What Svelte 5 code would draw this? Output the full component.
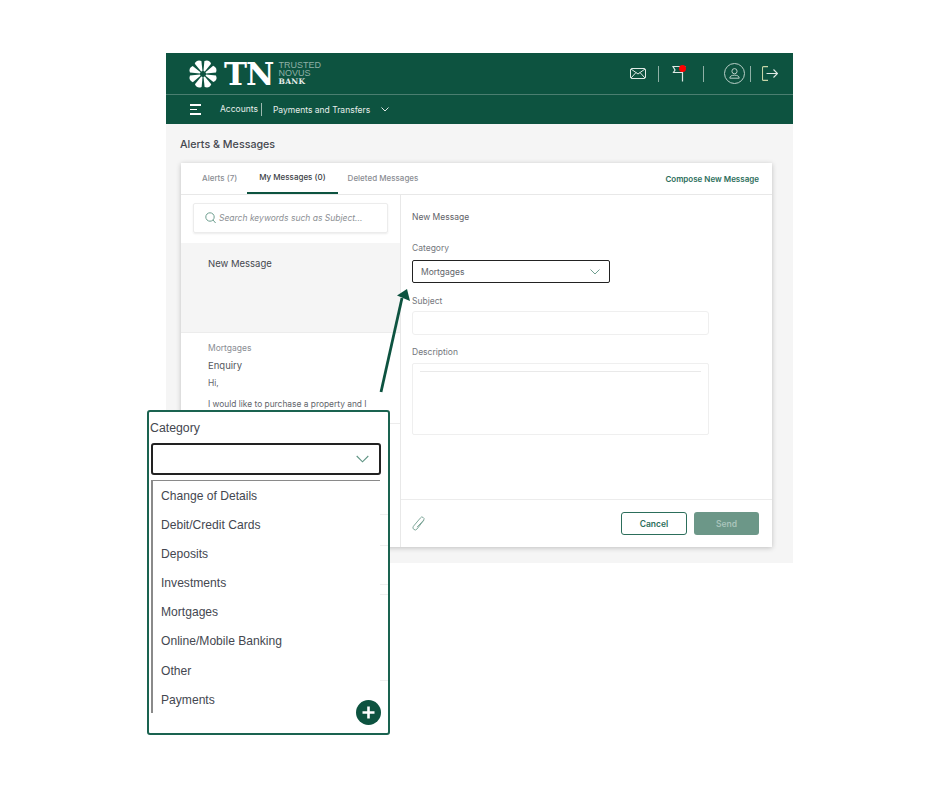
<script>
	const petals = [0, 45, 90, 135, 180, 225, 270, 315];
	const categories = [
		'Change of Details',
		'Debit/Credit Cards',
		'Deposits',
		'Investments',
		'Mortgages',
		'Online/Mobile Banking',
		'Other',
		'Payments'
	];
	// list rows of the page behind that peek out beside the dropdown panel
	const peeks = [102, 133, 172, 182, 268];
</script>

<div class="page">
	<div class="frame">
		<header class="top">
			<div class="logo">
				<svg class="flower" width="32" height="32" viewBox="-16 -16 32 32">
					{#each petals as a}
						<path d="M-0.7 -3L-3.6 -12.6Q0 -16 3.6 -12.6L0.7 -3Z" fill="#fff" transform="rotate({a + 22})" />
					{/each}
				</svg>
				<span class="tn">TN</span>
				<div class="bankname">
					<span>TRUSTED</span>
					<span>NOVUS</span>
					<b>BANK</b>
				</div>
			</div>
			<div class="tools">
				<svg class="mail" width="16" height="11" viewBox="0 0 16 11" fill="none" stroke="#dfe9e5" stroke-width="1">
					<rect x="0.5" y="0.5" width="15" height="10" rx="1.5" />
					<path d="M1 1l7 5 7-5M1 10l5-5.5M15 10l-5-5.5" />
				</svg>
				<i class="sep first"></i>
				<div class="flag">
					<svg width="14" height="17" viewBox="0 0 14 17" fill="none" stroke="#dfe9e5" stroke-width="1.2">
						<path d="M1 1.5h11l-1.5 1v5H1.5l1.5-2.5z M10.5 7.5V16.5" />
					</svg>
					<span class="dot"></span>
				</div>
				<i class="sep second"></i>
				<svg class="user" width="21" height="21" viewBox="0 0 21 21" fill="none" stroke="#b9cfc7" stroke-width="1">
					<circle cx="10.5" cy="10.5" r="10" />
					<circle cx="10.5" cy="8.2" r="2.6" />
					<path d="M5.8 15.2c0-2.2 2-3 4.7-3s4.7.8 4.7 3z" />
				</svg>
				<i class="sep third"></i>
				<svg class="logout" width="16" height="15" viewBox="0 0 16 15" fill="none" stroke="#dfe9e5" stroke-width="1.1">
					<path d="M6 .6H1.5a1 1 0 0 0-1 1v11.8a1 1 0 0 0 1 1H6" stroke="#c8d6a8" />
					<path d="M4.5 7.5h11M11.5 3.5l4 4-4 4" />
				</svg>
			</div>
		</header>
		<nav class="nav">
			<span class="burger"><i></i><i class="short"></i><i></i></span>
			<span class="navlink bar">Accounts</span>
			<span class="navlink">Payments and Transfers</span>
			<svg class="navchev" width="8" height="5" viewBox="0 0 8 5" fill="none" stroke="#dfe9e5" stroke-width="1">
				<path d="M.5 .5L4 4 7.5 .5" />
			</svg>
		</nav>

		<main class="main">
			<h1>Alerts &amp; Messages</h1>
			<section class="card">
				<div class="tabs">
					<span class="tab alerts">Alerts (7)</span>
					<span class="tab active">My Messages (0)</span>
					<span class="tab">Deleted Messages</span>
					<span class="compose">Compose New Message</span>
				</div>
				<div class="body">
					<aside class="left">
						<div class="searchwrap">
							<div class="search">
								<svg width="11" height="12" viewBox="0 0 11 12" fill="none" stroke="#6f9f90" stroke-width="1">
									<circle cx="5" cy="5" r="4.2" />
									<path d="M8 8l2.6 3" />
								</svg>
								<span>Search keywords such as Subject...</span>
							</div>
						</div>
						<div class="newmsg">New Message</div>
						<div class="msg">
							<div class="msgcat">Mortgages</div>
							<div class="msgsub">Enquiry</div>
							<div class="msgtext">Hi,</div>
							<div class="msgtext gap">I would like to purchase a property and I</div>
						</div>
					</aside>
					<div class="right">
						<div class="form">
							<div class="formtitle">New Message</div>
							<label class="lbl catlbl" for="cat">Category</label>
							<div class="select" id="cat">
								<span>Mortgages</span>
								<svg width="10" height="6" viewBox="0 0 10 6" fill="none" stroke="#6f9f90" stroke-width="1">
									<path d="M.5 .5L5 5 9.5 .5" />
								</svg>
							</div>
							<label class="lbl" for="subj">Subject</label>
							<div class="input" id="subj"></div>
							<label class="lbl desclbl" for="desc">Description</label>
							<div class="textarea" id="desc"><i></i></div>
						</div>
						<div class="foot">
							<svg width="14" height="15" viewBox="0 0 14 15" fill="none" stroke="#7fa79a" stroke-width="1">
								<path d="M12.5 3.5L5.5 12.5a2.2 2.2 0 0 1-3.6-2.7L8.8 1.6a1.5 1.5 0 0 1 3.5 1.9L5.6 10.6" transform="translate(-0.5 0.5)" />
							</svg>
							<div class="btns">
								<span class="btn cancel">Cancel</span>
								<span class="btn send">Send</span>
							</div>
						</div>
					</div>
				</div>
			</section>
		</main>
	</div>

	<svg class="arrow" width="40" height="110" viewBox="0 0 40 110">
		<path d="M3 104L24 10" stroke="#0d5340" stroke-width="2.8" fill="none" />
		<path d="M29 1L32 13L19 7.5Z" fill="#0d5340" />
	</svg>

	<div class="callout">
		<div class="cattitle">Category</div>
		<div class="bigselect">
			<svg width="13" height="8" viewBox="0 0 13 8" fill="none" stroke="#5f9484" stroke-width="1.1">
				<path d="M.7 1l5.8 5.8L12.3 1" />
			</svg>
		</div>
		<ul class="options">
			{#each categories as c}
				<li>{c}</li>
			{/each}
		</ul>
		{#each peeks as y}
			<i class="peek" style="top: {y}px"></i>
		{/each}
		<span class="plus">
			<svg width="25" height="25" viewBox="0 0 25 25">
				<circle cx="12.5" cy="12.5" r="12.5" fill="#0d5340" />
				<path d="M12.5 6.5v12M6.5 12.5h12" stroke="#fff" stroke-width="2.6" />
			</svg>
		</span>
	</div>
</div>

<style>
	:global(body) {
		background: #fff;
	}
	.page {
		position: relative;
		width: 940px;
		height: 788px;
		padding: 53px 0 0 166px;
		box-sizing: border-box;
		font-family: Inter, 'Liberation Sans', sans-serif;
		overflow: hidden;
	}
	.frame {
		width: 627px;
		height: 510px;
		background: #f5f5f5;
		display: flex;
		flex-direction: column;
	}
	.top {
		height: 41px;
		background: #0d5340;
		border-bottom: 1px solid #4b7e70;
		display: flex;
		align-items: center;
		justify-content: space-between;
		padding: 0 15px 0 21px;
		flex: none;
	}
	.logo {
		display: flex;
		align-items: center;
	}
	.flower {
		margin-right: 5px;
	}
	.tn {
		font-family: 'DejaVu Serif', 'Liberation Serif', serif;
		font-weight: 700;
		font-size: 31px;
		line-height: 32px;
		letter-spacing: -1px;
		color: #fff;
		margin-right: 5px;
	}
	.bankname {
		display: flex;
		flex-direction: column;
		font-size: 9px;
		line-height: 8.5px;
		color: #8fb0a6;
		font-family: 'Liberation Sans', sans-serif;
	}
	.bankname b {
		font-family: 'DejaVu Serif', serif;
		font-size: 7.5px;
		letter-spacing: 0.4px;
		color: #e8efec;
	}
	.tools {
		display: flex;
		align-items: center;
	}
	.sep {
		display: block;
		width: 1px;
		height: 16px;
		background: #8fb0a6;
	}
	.sep.first {
		margin: 0 13px 0 12px;
	}
	.sep.second {
		margin: 0 20px 0 17px;
	}
	.sep.third {
		margin: 0 11px 0 5px;
	}
	.flag {
		position: relative;
		display: flex;
	}
	.dot {
		position: absolute;
		top: 0;
		left: 7px;
		width: 7px;
		height: 7px;
		border-radius: 50%;
		background: #f00;
	}
	.nav {
		height: 29px;
		background: #0d5340;
		display: flex;
		align-items: center;
		padding-left: 24px;
		flex: none;
		color: #e6eeeb;
		font-size: 8.5px;
	}
	.burger {
		display: flex;
		flex-direction: column;
		gap: 3px;
		width: 11px;
		margin-right: 19px;
	}
	.burger i {
		display: block;
		height: 1.5px;
		background: #fff;
	}
	.burger i.short {
		width: 7px;
	}
	.navlink.bar {
		border-right: 1px solid #9db9b0;
		padding-right: 3px;
		margin-right: 11px;
		line-height: 13px;
	}
	.navchev {
		margin-left: 11px;
	}
	.main {
		padding: 0 21px 16px 15px;
		flex: 1;
		display: flex;
		flex-direction: column;
	}
	h1 {
		margin: 14px 0 11px -1px;
		font-size: 10.7px;
		line-height: 14px;
		font-weight: 500;
		color: #45484f;
	}
	.card {
		flex: 1;
		background: #fff;
		box-shadow: 0 1px 5px rgba(0, 0, 0, 0.22);
		display: flex;
		flex-direction: column;
		min-height: 0;
	}
	.tabs {
		height: 31px;
		flex: none;
		border-bottom: 1px solid #e8e8e8;
		display: flex;
		align-items: stretch;
		font-size: 8px;
		color: #8a8d93;
		font-weight: 500;
		padding-left: 21px;
		padding-right: 13px;
	}
	.tab {
		display: flex;
		align-items: center;
		padding-bottom: 2px;
	}
	.tab.alerts {
		margin-right: 10px;
	}
	.tab.active {
		color: #3c3f46;
		padding: 0 12px 2px;
		border-bottom: 2px solid #0d5340;
		margin-right: 10px;
		height: 31px;
		box-sizing: border-box;
	}
	.compose {
		margin-left: auto;
		align-self: center;
		color: #2c6e5b;
		font-weight: 600;
	}
	.body {
		flex: 1;
		display: flex;
		min-height: 0;
	}
	.left {
		width: 220px;
		flex: none;
		border-right: 1px solid #e8e8e8;
		box-sizing: border-box;
	}
	.searchwrap {
		padding: 8px 12px 10px;
	}
	.search {
		height: 30px;
		box-sizing: border-box;
		border: 1px solid #ececec;
		box-shadow: 0 1px 2px rgba(0, 0, 0, 0.08);
		border-radius: 2px;
		display: flex;
		align-items: center;
		gap: 3px;
		padding-left: 11px;
		font-size: 8.5px;
		font-style: italic;
		color: #8c8f94;
	}
	.newmsg {
		height: 90px;
		box-sizing: border-box;
		background: #f5f5f5;
		padding: 14px 0 0 27px;
		font-size: 9.5px;
		line-height: 14px;
		color: #45484f;
		border-bottom: 1px solid #ececec;
	}
	.msg {
		padding: 9px 0 0 27px;
		height: 91px;
		box-sizing: border-box;
		border-bottom: 1px solid #ececec;
	}
	.msgcat {
		font-size: 8.5px;
		line-height: 12px;
		color: #8a8d93;
	}
	.msgsub {
		font-size: 9.5px;
		line-height: 14px;
		margin-top: 5px;
		color: #55585e;
	}
	.msgtext {
		font-size: 8.4px;
		line-height: 12px;
		margin-top: 4px;
		color: #62656b;
	}
	.msgtext.gap {
		margin-top: 9px;
	}
	.right {
		flex: 1;
		display: flex;
		flex-direction: column;
	}
	.form {
		flex: 1;
		padding: 16px 0 0 11px;
		display: flex;
		flex-direction: column;
		align-items: flex-start;
	}
	.formtitle {
		font-size: 8.5px;
		line-height: 12px;
		color: #5f6268;
		margin-bottom: 19px;
	}
	.lbl {
		font-size: 8.5px;
		line-height: 12px;
		color: #74777d;
		margin-bottom: 4px;
	}
	.lbl.catlbl {
		margin-bottom: 6px;
	}
	.lbl.desclbl {
		margin-bottom: 5px;
	}
	.select {
		width: 198px;
		height: 23px;
		box-sizing: border-box;
		border: 1px solid #222;
		border-radius: 2px;
		display: flex;
		align-items: center;
		justify-content: space-between;
		padding: 0 9px 0 8px;
		font-size: 8.5px;
		color: #62656b;
		margin-bottom: 12px;
	}
	.input {
		width: 297px;
		height: 24px;
		box-sizing: border-box;
		border: 1px solid #efefef;
		border-radius: 3px;
		margin-bottom: 11px;
	}
	.textarea {
		width: 297px;
		height: 72px;
		box-sizing: border-box;
		border: 1px solid #efefef;
		border-radius: 2px;
		padding: 7px 7px 0;
	}
	.textarea i {
		display: block;
		height: 1px;
		background: #e9e9e9;
	}
	.foot {
		height: 47px;
		flex: none;
		border-top: 1px solid #ececec;
		display: flex;
		align-items: center;
		justify-content: space-between;
		padding: 0 13px 0 11px;
	}
	.btns {
		display: flex;
		gap: 7px;
	}
	.btn {
		width: 66px;
		height: 23px;
		box-sizing: border-box;
		border-radius: 3px;
		display: flex;
		align-items: center;
		justify-content: center;
		font-size: 8.5px;
		font-weight: 600;
	}
	.cancel {
		border: 1px solid #2c6e5b;
		color: #2c6e5b;
	}
	.send {
		width: 65px;
		background: #6c9788;
		color: #a9c4bb;
	}
	.arrow {
		position: absolute;
		left: 378px;
		top: 288px;
	}
	.callout {
		position: absolute;
		left: 147px;
		top: 410px;
		width: 243px;
		height: 325px;
		box-sizing: border-box;
		background: #fff;
		border: 2px solid #1a6350;
		border-radius: 3px;
		font-family: 'Liberation Sans', Arial, sans-serif;
		color: #444750;
	}
	.cattitle {
		font-size: 12.3px;
		line-height: 16px;
		margin: 8px 0 0 1px;
	}
	.bigselect {
		position: relative;
		margin: 7px 0 0 2px;
		width: 230px;
		height: 32px;
		box-sizing: border-box;
		border: 2px solid #222;
		border-radius: 3px;
		display: flex;
		align-items: center;
		justify-content: flex-end;
		padding-right: 10px;
	}
	.options {
		list-style: none;
		margin: 5px 0 0 2px;
		padding: 1px 0 0;
		width: 229px;
		height: 233px;
		box-sizing: border-box;
		border-top: 1px solid #8a8a8a;
		border-left: 2px solid #8a8a8a;
	}
	.options li {
		height: 29.1px;
		line-height: 29px;
		padding-left: 8px;
		font-size: 12.1px;
	}
	.peek {
		position: absolute;
		left: 231px;
		width: 8px;
		height: 1px;
		background: #efefef;
	}
	.plus {
		position: absolute;
		left: 207px;
		top: 288px;
		display: flex;
	}
</style>
